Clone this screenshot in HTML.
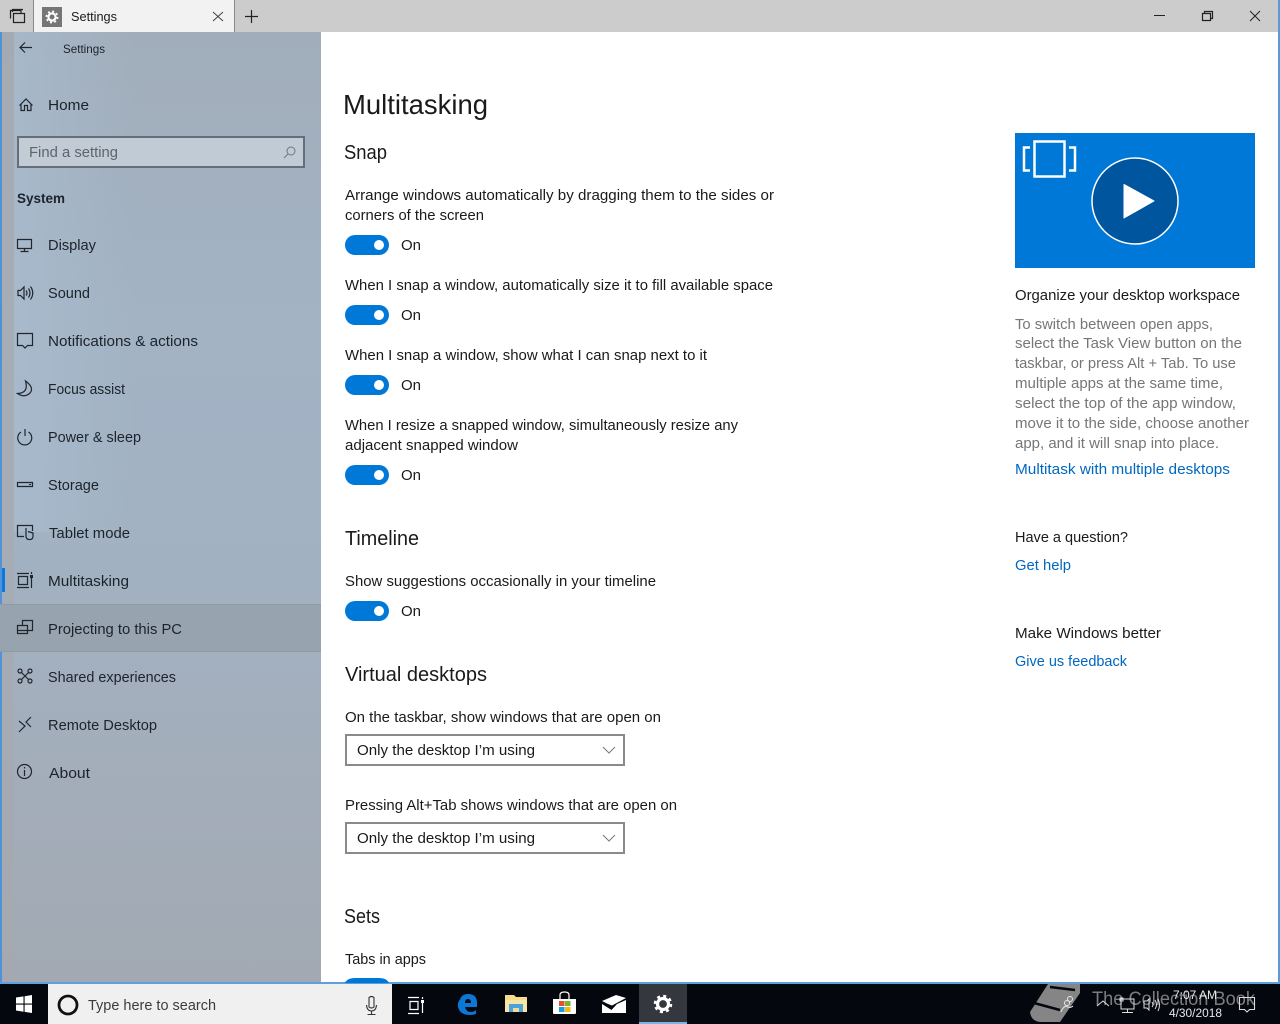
<!DOCTYPE html>
<html><head><meta charset="utf-8"><title>Settings</title>
<style>
html,body{margin:0;padding:0;width:1280px;height:1024px;overflow:hidden;background:#fff}
svg{display:block}
text{font-family:"Liberation Sans",sans-serif;font-size:15px;fill:#1a1a1a}
.nav{fill:#1c232b}
.ic{fill:none;stroke:#20262e;stroke-width:1.2}
.g{fill:#767676}
.l{fill:#0067c0}
.w{fill:#e8e8e8;font-size:12px}
</style></head><body>
<svg width="1280" height="1024" viewBox="0 0 1280 1024" xmlns="http://www.w3.org/2000/svg">
<defs>
<linearGradient id="sb" x1="0" y1="0" x2="0" y2="1">
<stop offset="0" stop-color="#a1adba"/><stop offset=".3" stop-color="#a3b3c4"/><stop offset=".5" stop-color="#a2b2c3"/><stop offset=".75" stop-color="#a3aebb"/><stop offset="1" stop-color="#a2a9b3"/>
</linearGradient>
<linearGradient id="sh" x1="0" y1="0" x2="1" y2="0">
<stop offset="0" stop-color="#a9bccf" stop-opacity=".7"/><stop offset="1" stop-color="#a9bccf" stop-opacity="0"/>
</linearGradient>
</defs>
<rect width="1280" height="1024" fill="#fff"/>
<!-- title bar -->
<rect width="1280" height="32" fill="#cccccc"/>
<rect x="34" y="0" width="200" height="32" fill="#f2f2f2"/>
<rect x="33" y="0" width="1" height="32" fill="#8a8a8a"/><rect x="234" y="0" width="1" height="32" fill="#8a8a8a"/>
<path d="M10.500 18.500V10.500H21V13.500M12.500 12V9.500H23M13.500 13.500H24.500V22.500H13.500Z" fill="none" stroke="#222" stroke-width="1.200"/>
<rect x="42" y="7" width="20" height="20" fill="#767676"/>
<circle cx="52" cy="17" r="3.6" fill="none" stroke="#fff" stroke-width="2.2"/>
<circle cx="52" cy="17" r="5.6" fill="none" stroke="#fff" stroke-width="1.8" stroke-dasharray="2 2.4"/>
<text x="71" y="21" style="font-size:13px" textLength="46" lengthAdjust="spacingAndGlyphs">Settings</text>
<path d="M213 12L223 21M223 12L213 21" stroke="#444" stroke-width="1" fill="none"/>
<path d="M245 16.500H258M251.500 10V23" stroke="#222" stroke-width="1.2" fill="none"/>
<rect x="1154" y="15" width="11" height="1" fill="#222"/>
<path d="M1202.500 13.500H1210.500V20.500H1202.500ZM1204.500 13V11.500H1212.500V18.500H1211" fill="none" stroke="#222" stroke-width="1.2"/>
<path d="M1250 11L1260 21M1260 11L1250 21" stroke="#222" stroke-width="1" fill="none"/>
<rect x="1278" y="0" width="2" height="984" fill="#5c9ad6"/>
<rect x="1277" y="32" width="1" height="952" fill="#f3f3f3"/>
<!-- sidebar -->
<rect x="0" y="32" width="321" height="952" fill="url(#sb)"/>
<rect x="14" y="32" width="120" height="500" fill="url(#sh)"/>
<rect x="1" y="32" width="13" height="952" fill="#a6a9ae" opacity=".6"/>
<rect x="0" y="32" width="2" height="952" fill="#4f92d6"/>
<rect x="0" y="982" width="1280" height="2" fill="#5ea0de"/>
<rect x="321" y="32" width="957" height="950" fill="#fff"/>
<rect x="0" y="604" width="321" height="48" fill="#97a3af"/>
<rect x="0" y="604" width="321" height="1" fill="#8e9aa6"/><rect x="0" y="651" width="321" height="1" fill="#8e9aa6"/>
<rect x="2" y="568" width="3" height="24" fill="#0a78e2"/>
<path class="ic" d="M32 47.500H20M25 42.500L20 47.500L25 52.500"/>
<text x="63" y="53" class="nav" style="font-size:12px" textLength="42" lengthAdjust="spacingAndGlyphs">Settings</text>
<path class="ic" d="M19.500 105.500L26 99L32.500 105.500M21 104V110.500H24.500V105.500H27.500V110.500H31V104"/>
<text x="48" y="110" class="nav" textLength="41" lengthAdjust="spacingAndGlyphs">Home</text>
<rect x="18" y="137" width="286" height="30" fill="#c3ccd6" fill-opacity=".95" stroke="#666e77" stroke-width="2"/>
<text x="29" y="157" style="fill:#5e646b" textLength="89" lengthAdjust="spacingAndGlyphs">Find a setting</text>
<circle cx="291" cy="151" r="4" fill="none" stroke="#6f767d"/><path d="M288 154L284 158" stroke="#6f767d" fill="none"/>
<text x="17" y="203" style="font-weight:bold;fill:#1c232b;font-size:14px" textLength="48" lengthAdjust="spacingAndGlyphs">System</text>
<!-- nav items -->
<path class="ic" d="M17.500 239.500H31.500V248.500H17.500ZM24.500 248.500V251.500M20.500 251.500H28.500"/>
<text x="48" y="250" class="nav" textLength="48" lengthAdjust="spacingAndGlyphs">Display</text>
<path class="ic" d="M18 290.500H20.500L24 287V299L20.500 295.500H18ZM26 290.500Q28 293 26 295.500M28.500 288.500Q31.500 293 28.500 297.500M30.500 286.500Q35 293 30.500 299.500"/>
<text x="48" y="298" class="nav" textLength="42" lengthAdjust="spacingAndGlyphs">Sound</text>
<path class="ic" d="M17.500 333.500H32.500V345.500H27.500L25 348L22.500 345.500H17.500Z"/>
<text x="48" y="346" class="nav" textLength="150" lengthAdjust="spacingAndGlyphs">Notifications &amp; actions</text>
<path class="ic" d="M25.500 381Q35 388 29.500 393.500Q24 398 17.500 393.500Q29 393 25.500 381Z"/>
<text x="48" y="394" class="nav" textLength="77" lengthAdjust="spacingAndGlyphs">Focus assist</text>
<path class="ic" d="M21 432A7 7 0 1 0 28.500 432M25 429V436"/>
<text x="48" y="442" class="nav" textLength="93" lengthAdjust="spacingAndGlyphs">Power &amp; sleep</text>
<path class="ic" d="M17.500 482.500H32.500V486.500H17.500Z"/><rect x="29" y="484" width="2" height="1" fill="#20262e"/>
<text x="48" y="490" class="nav" textLength="51" lengthAdjust="spacingAndGlyphs">Storage</text>
<path class="ic" d="M24 536.500H17.500V525.500H32.500V531M26 528V537Q27 540 30 539.500Q33 539.500 33 536V533L28 531.500"/>
<text x="49" y="538" class="nav" textLength="81" lengthAdjust="spacingAndGlyphs">Tablet mode</text>
<path class="ic" d="M17 573.500H29M18.500 576.500H27.500V584.500H18.500ZM17 587.500H29M31.500 572V574M31.500 578V588"/><rect x="30" y="575" width="3" height="3" fill="#20262e"/>
<text x="48" y="586" class="nav" textLength="81" lengthAdjust="spacingAndGlyphs">Multitasking</text>
<path class="ic" d="M22.500 625V620.500H32.500V630.500H28M17.500 625.500H27.500V633.500H17.500ZM17.500 630.500H27.500"/>
<text x="48" y="634" class="nav" textLength="134" lengthAdjust="spacingAndGlyphs">Projecting to this PC</text>
<path class="ic" d="M21.500 672.500L28.500 679.500M28.500 672.500L21.500 679.500"/>
<circle class="ic" cx="20" cy="671" r="2"/><circle class="ic" cx="30" cy="671" r="2"/><circle class="ic" cx="20" cy="681" r="2"/><circle class="ic" cx="30" cy="681" r="2"/>
<text x="48" y="682" class="nav" textLength="128" lengthAdjust="spacingAndGlyphs">Shared experiences</text>
<path class="ic" d="M19 721L25 726L19 732M31 717L26 722L31 727"/>
<text x="48" y="730" class="nav" textLength="109" lengthAdjust="spacingAndGlyphs">Remote Desktop</text>
<circle class="ic" cx="24.500" cy="771.500" r="7"/><path class="ic" d="M24.500 770V776M24.500 767V768.500"/>
<text x="49" y="778" class="nav" textLength="41" lengthAdjust="spacingAndGlyphs">About</text>
<!-- main -->
<text x="343" y="114" style="font-size:28px" textLength="145" lengthAdjust="spacingAndGlyphs">Multitasking</text>
<text x="344" y="159" style="font-size:20px" textLength="43" lengthAdjust="spacingAndGlyphs">Snap</text>
<text x="345" y="200" textLength="429" lengthAdjust="spacingAndGlyphs">Arrange windows automatically by dragging them to the sides or</text>
<text x="345" y="220" textLength="139" lengthAdjust="spacingAndGlyphs">corners of the screen</text>
<rect x="345" y="235" width="44" height="20" rx="10" fill="#0078d7"/><circle cx="379" cy="245" r="5" fill="#fff"/>
<text x="401" y="250" textLength="20" lengthAdjust="spacingAndGlyphs">On</text>
<text x="345" y="290" textLength="428" lengthAdjust="spacingAndGlyphs">When I snap a window, automatically size it to fill available space</text>
<rect x="345" y="305" width="44" height="20" rx="10" fill="#0078d7"/><circle cx="379" cy="315" r="5" fill="#fff"/>
<text x="401" y="320" textLength="20" lengthAdjust="spacingAndGlyphs">On</text>
<text x="345" y="360" textLength="362" lengthAdjust="spacingAndGlyphs">When I snap a window, show what I can snap next to it</text>
<rect x="345" y="375" width="44" height="20" rx="10" fill="#0078d7"/><circle cx="379" cy="385" r="5" fill="#fff"/>
<text x="401" y="390" textLength="20" lengthAdjust="spacingAndGlyphs">On</text>
<text x="345" y="430" textLength="393" lengthAdjust="spacingAndGlyphs">When I resize a snapped window, simultaneously resize any</text>
<text x="345" y="450" textLength="173" lengthAdjust="spacingAndGlyphs">adjacent snapped window</text>
<rect x="345" y="465" width="44" height="20" rx="10" fill="#0078d7"/><circle cx="379" cy="475" r="5" fill="#fff"/>
<text x="401" y="480" textLength="20" lengthAdjust="spacingAndGlyphs">On</text>
<text x="345" y="545" style="font-size:20px" textLength="74" lengthAdjust="spacingAndGlyphs">Timeline</text>
<text x="345" y="586" textLength="311" lengthAdjust="spacingAndGlyphs">Show suggestions occasionally in your timeline</text>
<rect x="345" y="601" width="44" height="20" rx="10" fill="#0078d7"/><circle cx="379" cy="611" r="5" fill="#fff"/>
<text x="401" y="616" textLength="20" lengthAdjust="spacingAndGlyphs">On</text>
<text x="345" y="681" style="font-size:20px" textLength="142" lengthAdjust="spacingAndGlyphs">Virtual desktops</text>
<text x="345" y="722" textLength="316" lengthAdjust="spacingAndGlyphs">On the taskbar, show windows that are open on</text>
<rect x="346" y="735" width="278" height="30" fill="#fff" stroke="#8a8a8a" stroke-width="2"/>
<text x="357" y="755" textLength="178" lengthAdjust="spacingAndGlyphs">Only the desktop I’m using</text>
<path d="M603 747L609 753L615 747" fill="none" stroke="#777" stroke-width="1"/>
<text x="345" y="810" textLength="332" lengthAdjust="spacingAndGlyphs">Pressing Alt+Tab shows windows that are open on</text>
<rect x="346" y="823" width="278" height="30" fill="#fff" stroke="#8a8a8a" stroke-width="2"/>
<text x="357" y="843" textLength="178" lengthAdjust="spacingAndGlyphs">Only the desktop I’m using</text>
<path d="M603 835L609 841L615 835" fill="none" stroke="#777" stroke-width="1"/>
<text x="344" y="923" style="font-size:20px" textLength="36" lengthAdjust="spacingAndGlyphs">Sets</text>
<text x="345" y="964" textLength="81" lengthAdjust="spacingAndGlyphs">Tabs in apps</text>
<path d="M345 983Q347 978 355 978H379Q387 978 389 983Z" fill="#0078d7"/>
<!-- right column -->
<rect x="1015" y="133" width="240" height="135" fill="#0078d7"/>
<rect x="1034.500" y="141.500" width="30" height="35" fill="none" stroke="#fff" stroke-width="2.500"/>
<path d="M1030 147.500H1024V170.500H1030M1069 147.500H1075V170.500H1069" fill="none" stroke="#fff" stroke-width="2.500"/>
<circle cx="1135" cy="201" r="43" fill="#00559f" stroke="#fff" stroke-width="1.500"/>
<path d="M1124 184.500L1154 201L1124 218Z" fill="#fff" stroke="#fff" stroke-linejoin="round"/>
<text x="1015" y="300" textLength="225" lengthAdjust="spacingAndGlyphs">Organize your desktop workspace</text>
<text x="1015" y="329" class="g" textLength="198" lengthAdjust="spacingAndGlyphs">To switch between open apps,</text>
<text x="1015" y="348" class="g" textLength="227" lengthAdjust="spacingAndGlyphs">select the Task View button on the</text>
<text x="1015" y="368" class="g" textLength="221" lengthAdjust="spacingAndGlyphs">taskbar, or press Alt + Tab. To use</text>
<text x="1015" y="388" class="g" textLength="208" lengthAdjust="spacingAndGlyphs">multiple apps at the same time,</text>
<text x="1015" y="408" class="g" textLength="221" lengthAdjust="spacingAndGlyphs">select the top of the app window,</text>
<text x="1015" y="428" class="g" textLength="234" lengthAdjust="spacingAndGlyphs">move it to the side, choose another</text>
<text x="1015" y="448" class="g" textLength="204" lengthAdjust="spacingAndGlyphs">app, and it will snap into place.</text>
<text x="1015" y="474" class="l" textLength="215" lengthAdjust="spacingAndGlyphs">Multitask with multiple desktops</text>
<text x="1015" y="542" textLength="113" lengthAdjust="spacingAndGlyphs">Have a question?</text>
<text x="1015" y="570" class="l" textLength="56" lengthAdjust="spacingAndGlyphs">Get help</text>
<text x="1015" y="638" textLength="146" lengthAdjust="spacingAndGlyphs">Make Windows better</text>
<text x="1015" y="666" class="l" textLength="112" lengthAdjust="spacingAndGlyphs">Give us feedback</text>
<!-- taskbar -->
<rect x="0" y="984" width="1280" height="40" fill="#05070f"/>
<path d="M16 997.500L23.500 996.400V1003.500H16ZM24.600 996.200L32 995V1003.500H24.600ZM16 1004.600H23.500V1011.700L16 1010.500ZM24.600 1004.600H32V1013L24.600 1011.900Z" fill="#fff"/>
<rect x="48" y="984" width="344" height="40" fill="#f0f0f0"/>
<circle cx="68" cy="1005" r="9" fill="none" stroke="#111" stroke-width="2.800"/>
<text x="88" y="1010" style="fill:#3c3c3c" textLength="128" lengthAdjust="spacingAndGlyphs">Type here to search</text>
<path d="M369 997.500Q371.500 995.500 374 997.500V1007Q371.500 1009 369 1007ZM366.500 1005Q367 1011 371.500 1011Q376 1011 376.500 1005M371.500 1011V1014M367.500 1014.500H375.500" fill="none" stroke="#333" stroke-width="1.100"/>
<path d="M408 997.500H419M410 1001.500H418V1009.500H410ZM408 1013.500H419M422.500 997V999M422.500 1003V1013" fill="none" stroke="#fff" stroke-width="1.200"/><rect x="421" y="1000" width="3" height="3" fill="#fff"/>
<!-- edge -->
<path d="M459 1003Q460 994 468 994Q477 994 477 1003V1007H465Q466 1012 471 1012Q474 1012 476 1010V1014Q473 1015 470 1015Q460 1015 458 1007Q457 1000 464 996Q459 999 459 1003ZM465 1003H471Q471 999 468 999Q465 999 465 1003Z" fill="#0a78d7" fill-rule="evenodd"/>
<!-- explorer -->
<path d="M505 995H514L516 997H527V1012H505Z" fill="#f5dc8c"/>
<path d="M505 1000H527V1012H505Z" fill="#f9e4a4"/>
<path d="M509 1004H523V1012H509Z" fill="#4aa3dc"/><rect x="513" y="1008" width="6" height="4" fill="#f2dd9c"/>
<!-- store -->
<path d="M553 999H576V1013Q576 1014 574 1014H555Q553 1014 553 1013Z" fill="#fff"/>
<path d="M560 999V995Q560 992 564.500 992Q569 992 569 995V999" fill="none" stroke="#fff" stroke-width="1.200"/>
<rect x="559" y="1001" width="5.500" height="5" fill="#e8512b"/><rect x="565" y="1001" width="5.500" height="5" fill="#75b82c"/><rect x="559" y="1007" width="5.500" height="5" fill="#159fe0"/><rect x="565" y="1007" width="5.500" height="5" fill="#fbb80f"/>
<!-- mail -->
<path d="M602 1001L616 995L626 998L612 1005.500L608 1004Z" fill="#fff"/>
<path d="M602 1004L611.500 1010L617 1004L626 1000V1013H602Z" fill="#fff"/>
<!-- settings active -->
<rect x="639" y="984" width="48" height="38" fill="#34373e"/>
<rect x="639" y="1022" width="48" height="2" fill="#7db4e6"/>
<circle cx="663" cy="1004" r="5.500" fill="none" stroke="#fff" stroke-width="3.200"/>
<circle cx="663" cy="1004" r="8" fill="none" stroke="#fff" stroke-width="2.500" stroke-dasharray="3 3.280"/>
<!-- watermark -->
<path d="M1048 984H1080V993L1060 1022H1040Q1031 1021 1030 1012Z" fill="#858585"/>
<path d="M1050 987L1075 990M1034 1003L1060 1010" stroke="#05070f" stroke-width="2.500" fill="none"/>
<path d="M1061 1012Q1063 1007 1066 1006M1066 1006Q1070 1009 1073 1006" stroke="#e8e8e8" fill="none"/><circle cx="1067" cy="1003" r="2.500" fill="none" stroke="#e8e8e8"/><circle cx="1070" cy="999" r="2.500" fill="none" stroke="#e8e8e8"/>
<text x="1092" y="1005" style="fill:#7c7c7c;font-size:19px" textLength="163" lengthAdjust="spacingAndGlyphs">The Collection Book</text>
<path d="M1097 1006L1103 1001L1109 1006" fill="none" stroke="#ddd"/>
<path d="M1121 999H1134V1009H1121ZM1127.500 1009V1012M1122 1012.500H1133M1120 998H1123V1001H1120Z" fill="none" stroke="#ddd"/>
<path d="M1144 1001H1147L1149 999V1010L1147 1008H1144ZM1152 1002Q1154 1005 1152 1007M1155 1000Q1158 1005 1155 1009M1158 999Q1161 1005 1158 1011" fill="none" stroke="#ddd"/>
<text x="1173" y="999" class="w" textLength="44" lengthAdjust="spacingAndGlyphs">7:07 AM</text>
<text x="1169" y="1017" class="w" textLength="53" lengthAdjust="spacingAndGlyphs">4/30/2018</text>
<path d="M1239.500 997.500H1254.500V1009.500H1249.500L1247 1012L1244.500 1009.500H1239.500Z" fill="none" stroke="#ddd" stroke-width="1.100"/>
</svg>
</body></html>
